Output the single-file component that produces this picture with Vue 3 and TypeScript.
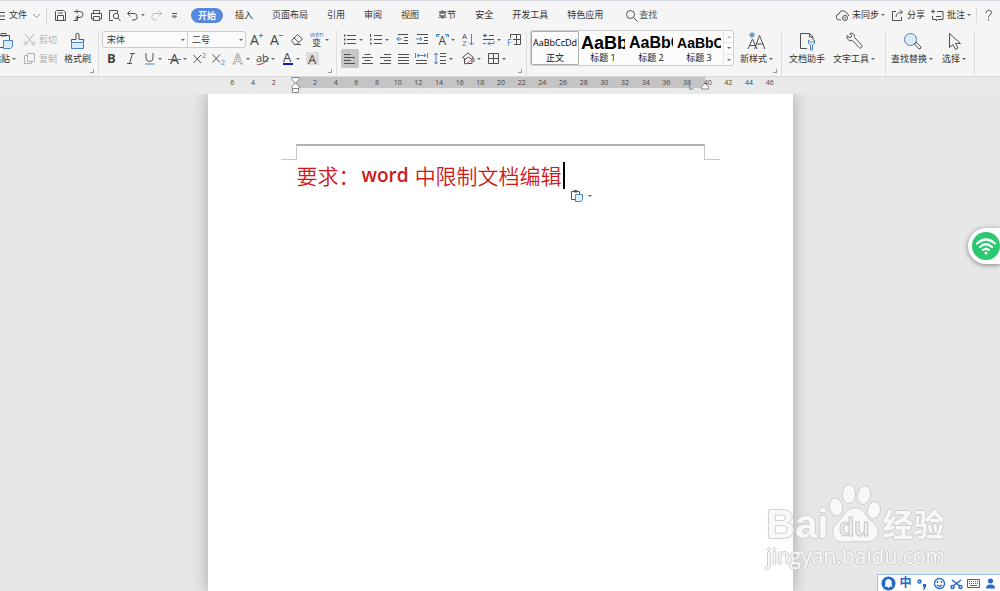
<script setup lang="ts">
import { ref } from 'vue'

interface Tool {
  icon: string
  label: string
  caret?: boolean
  active?: boolean
}

const A = (size: number, x: number, y: number, extra = '') =>
  `<text x="${x}" y="${y}" font-size="${size}" ${extra}>A</text>`

const icons: Record<string, string> = {
  menu: '<path d="M0 4.500h5M0 8h5M0 11.500h5"/>',
  chevron: '<path d="M4 6l3.500 3.500L11 6" stroke="#999"/>',
  save: '<path d="M3.500 2.500h7l2 2v8h-10v-9zM4.500 12.500v-5h6v5M5 5h5"/>',
  export: '<path d="M3 3.500h4M6 1.500v4M6 3.500h3a3 3 0 0 1 0 6H6M8 7.500l-3 2v3M2.500 12.500h4v-3"/>',
  print: '<path d="M4.500 5V2.500h6V5M4.500 11h-2V5.500h10V11h-2M4.500 8.500h6v4h-6z"/>',
  preview: '<path d="M6 12.500H2.500v-10h8V5"/><circle cx="9" cy="8" r="2.700"/><path d="M11 10l2.500 3"/>',
  undo: '<path d="M5.500 2.500l-3 3 3 3M2.500 5.500H9a3 3 0 0 1 0 6.500H7"/>',
  redo: '<path d="M9.500 2.500l3 3-3 3M12.500 5.500H6A3 3 0 0 0 6 12h2" stroke="#bbb"/>',
  more: '<path d="M5 5.500h5M5.500 8h4l-2 2z"/>',
  search: '<circle cx="6.500" cy="6.500" r="4"/><path d="M9.500 9.500l4 4"/>',
  cloud: '<path d="M6 12H4.500a3 3 0 0 1-.500-6 4 4 0 0 1 7.500-1 3 3 0 0 1 2 3"/><circle cx="10" cy="10" r="2.500"/><path d="M9 10h2"/>',
  share: '<path d="M6 3.500H2.500v9h9V9M6 9c0-3 2-5 6-5M10 1.500L12.500 4 10 6.500"/>',
  comment: '<path d="M7 3.500h6v8H8l-1.500 1.500v-1.500h-4V8M1 3.500h4M3 1.500v4M6 8.500h5"/>',
  help: '<path d="M5 5c0-3.500 5.500-3.500 5.500-.500C10.500 7 7.500 6.500 7.500 9.500M7.500 11v1.500"/>',
  cut: '<path d="M3 2l7.500 9M12 2l-7.500 9" stroke="#b4b4b4"/><circle cx="3.500" cy="11.500" r="1.500" stroke="#b4b4b4"/><circle cx="11.500" cy="11.500" r="1.500" stroke="#b4b4b4"/>',
  copy: '<path d="M5.500 2.500h7v8h-7zM5 4.500H2.500v8h7V11" stroke="#b4b4b4"/>',
  grow: A(14, 1, 12.5) + '<path d="M10 3.500h4M12 1.500v4" stroke="#4b84c4"/>',
  shrink: A(14, 1, 12.5) + '<path d="M10 3.500h4" stroke="#4b84c4"/>',
  eraser: '<path d="M2.500 8.500l6-6 5 4.500-6 5.500h-2zM5 6l5 4.500M5 12.500h7"/>',
  pinyin: '<text x="1" y="5" font-size="7" fill="#4b84c4">wén</text><text x="3" y="14" font-size="9">变</text>',
  bold: '<text x="3" y="12" font-size="13" font-weight="700">B</text>',
  italic: '<path d="M7 2.500h5M4 12.500h5M9.500 2.500l-3 10"/>',
  underline: '<path d="M4 2v5a3.500 3.500 0 0 0 7 0V2"/><path d="M3 13h9.500" stroke="#4b84c4"/>',
  strike: A(14, 3, 12.5) + '<path d="M1 8.500h13" stroke="#d04858"/>',
  superscript: '<path d="M1.500 4l7.500 8M9 4l-7.500 8"/><text x="10" y="7" font-size="7" fill="#4b84c4">2</text>',
  subscript: '<path d="M1.500 3.500l7.500 8M9 3.500l-7.500 8"/><text x="10" y="14" font-size="7" fill="#4b84c4">2</text>',
  outline: '<text x="3" y="12.500" font-size="14" font-weight="600" style="fill:#fff;stroke:#aaa;stroke-width:.8">A</text>',
  highlight: '<text x="1" y="11" font-size="11">ab</text><path d="M4 13.500l4-1 6-6" /><path d="M2 13.500h4" stroke="#d06070"/>',
  fontcolor: A(13, 3, 10.5) + '<path d="M3 13h10" stroke="#1414c8" stroke-width="2"/>',
  shade: '<path d="M1 1h13v13H1z" fill="#ddd" stroke="none"/>' + A(13, 3, 12.5),
  bullets: '<path d="M4 3.500h9M4 7.500h9M4 11.500h9"/><path d="M1 3.500h1.500M1 7.500h1.500M1 11.500h1.500" stroke-width="2"/>',
  numbering: '<path d="M5 3.500h8M5 7.500h8M5 11.500h8M1.500 2v3"/><path d="M1 7.500h1.500M1 11.500h1.500" stroke-width="2"/>',
  outdent: '<path d="M3 2.500h10M9 5.500h4M9 8.500h4M3 11.500h10"/><path d="M7 7H1.500M4 5L2 7l2 2" stroke="#4b84c4"/>',
  indent: '<path d="M2 2.500h11M9 5.500h4M9 8.500h4M2 11.500h11"/><path d="M1 7h6M5 5l2 2-2 2" stroke="#4b84c4"/>',
  scale: A(12, 3.5, 13) + '<path d="M1.500 5V2.500H5M2 3l2 2M13.500 5V2.500H10M13 3l-2 2" stroke="#4b84c4"/>',
  sort: '<text x="1" y="7" font-size="8">A</text><text x="1" y="14" font-size="8" fill="#4b84c4">Z</text><path d="M10.500 2v11M8 10.500l2.500 2.500 2.500-2.500" stroke="#4b84c4"/>',
  wrap: '<path d="M2 3.500h4M8 3.500h5M2 7.500h11"/><path d="M3 2l3 1.500L3 5M2 11.500h3M13 9v2.500H7M9 9.500l-2 2 2 2" stroke="#4b84c4"/>',
  frame: '<path d="M3.500 6V2.500h10v10H7M9.500 2.500v10M6 7.500h7.500"/><text x="0" y="14" font-size="9" fill="#4b84c4">F</text>',
  left: '<path d="M2 3.500h7M2 6.500h11M2 9.500h7M2 12.500h11"/>',
  center: '<path d="M4.500 3.500h6M2 6.500h11M4.500 9.500h6M2 12.500h11"/>',
  right: '<path d="M6 3.500h7M2 6.500h11M6 9.500h7M2 12.500h11"/>',
  justify: '<path d="M2 3.500h11M2 6.500h11M2 9.500h11M2 12.500h11"/>',
  distribute: '<path d="M2 9.500h11M2 12.500h11"/><path d="M1.500 2v5M13.500 2v5M3 4.500h9M5 3L3 4.500 5 6M10 3l2 1.500L10 6" stroke="#4b84c4"/>',
  spacing: '<path d="M7 2.500h6M7 5.500h6M7 9.500h6M7 12.500h6"/><path d="M3 2v11M1 4l2-2 2 2M1 11l2 2 2-2" stroke="#4b84c4"/>',
  fill: '<path d="M1.500 6.500L7 2l6 5-2 .500v5H3.500v-5zM4 8.500l3.500-2.500 3.500 2.500M13 8v3"/><path d="M4 13.500l6-4" stroke="#d06070"/>',
  border: '<path d="M2.500 2.500h10v10h-10zM7.500 2.500v10M2.500 7.500h10"/>',
}

const bigIcons: Record<string, string> = {
  paste: '<path d="M1 3.500h11.500V8M4 3V1.500h5V4H4M1 15.500h5"/><path d="M6.500 8.500h9v6l-2 2h-7z" fill="#dcebfa" stroke="#4b84c4"/>',
  painter: '<path d="M2.500 10V7.500H7V2q1.500-1.500 3 0v5.500h4.500V10"/><path d="M2.500 10.500h12v6h-12z" fill="#dcebfa" stroke="#4b84c4"/>',
  newstyle: '<path d="M1 17L5.500 7 10 17M2.500 13.500h6M7.500 17L12.500 3.500 18 17M9.500 12h6.500"/><path d="M5 0v6M2 3h6M3 1l4 4M7 1L3 5" stroke="#4b84c4"/>',
  assistant: '<path d="M9 16.500H2.500v-15h9L15 5v3M11.500 1.500V5H15"/><path d="M10.500 8v3.500l2 1.500V18h2v-5l2-1.500V8l-2 2h-2z" fill="#dcebfa" stroke="#4b84c4"/>',
  wrench: '<path d="M2 3.500l3 2.500 2-2-2-2.500c3-1 5 1 4.500 4l7 7.500c1.500 2-1 4-2.500 2.500L7.500 8.500C4 9.500 1.500 7 2 3.500z"/>',
  find: '<circle cx="7.500" cy="7.500" r="6" fill="#dcebfa" stroke="#4b84c4"/><path d="M12 11l1-1 5 5q0 2-2 2l-4.500-5z"/>',
  pointer: '<path d="M4.500 1.500v14l3.500-3 2.500 5 2.500-1.500-2.500-4.500h5z"/>',
}

const quick: Tool[] = [
  { icon: 'save', label: '保存' },
  { icon: 'export', label: '输出' },
  { icon: 'print', label: '打印' },
  { icon: 'preview', label: '打印预览' },
  { icon: 'undo', label: '撤销', caret: true },
  { icon: 'redo', label: '恢复' },
  { icon: 'more', label: '更多' },
]
const tabs = ['开始', '插入', '页面布局', '引用', '审阅', '视图', '章节', '安全', '开发工具', '特色应用']
const current = ref('开始')

const fontTop: Tool[] = [
  { icon: 'grow', label: '增大字号' },
  { icon: 'shrink', label: '减小字号' },
  { icon: 'eraser', label: '清除格式' },
  { icon: 'pinyin', label: '拼音指南', caret: true },
]
const fontBottom: Tool[] = [
  { icon: 'bold', label: '加粗' },
  { icon: 'italic', label: '倾斜' },
  { icon: 'underline', label: '下划线', caret: true },
  { icon: 'strike', label: '删除线', caret: true },
  { icon: 'superscript', label: '上标' },
  { icon: 'subscript', label: '下标' },
  { icon: 'outline', label: '文字效果', caret: true },
  { icon: 'highlight', label: '突出显示', caret: true },
  { icon: 'fontcolor', label: '字体颜色', caret: true },
  { icon: 'shade', label: '字符底纹' },
]
const paraTop: Tool[] = [
  { icon: 'bullets', label: '项目符号', caret: true },
  { icon: 'numbering', label: '编号', caret: true },
  { icon: 'outdent', label: '减少缩进量' },
  { icon: 'indent', label: '增加缩进量' },
  { icon: 'scale', label: '中文版式', caret: true },
  { icon: 'sort', label: '排序' },
  { icon: 'wrap', label: '换行', caret: true },
  { icon: 'frame', label: '制表位' },
]
const aligns: Tool[] = [
  { icon: 'left', label: '左对齐', active: true },
  { icon: 'center', label: '居中' },
  { icon: 'right', label: '右对齐' },
  { icon: 'justify', label: '两端对齐' },
  { icon: 'distribute', label: '分散对齐' },
]
const paraBottom: Tool[] = [
  { icon: 'fill', label: '底纹颜色', caret: true },
  { icon: 'border', label: '边框', caret: true },
]
const styles = [
  { name: '正文', sample: 'AaBbCcDd', kind: 'body' },
  { name: '标题 1', sample: 'AaBb', kind: 'h1' },
  { name: '标题 2', sample: 'AaBbC', kind: 'h2' },
  { name: '标题 3', sample: 'AaBbCc', kind: 'h3' },
]
const marks = Array.from({ length: 27 }, (_, i) => Math.abs(i * 2 - 6))
</script>

<template>
  <div class="app">
    <header class="menubar">
      <button class="file">
        <svg class="icon burger" viewBox="0 0 5 15" v-html="icons.menu"></svg>文件
        <svg class="icon" viewBox="0 0 15 15" v-html="icons.chevron"></svg>
      </button>
      <div class="quick">
        <button v-for="t in quick" :key="t.icon" class="tool" :aria-label="t.label">
          <svg class="icon" viewBox="0 0 15 15" v-html="icons[t.icon]"></svg>
          <i v-if="t.caret" class="caret"></i>
        </button>
      </div>
      <nav class="tabs">
        <button v-for="t in tabs" :key="t" :class="{ on: t === current }" @click="current = t">{{ t }}</button>
      </nav>
      <label class="search">
        <svg class="icon" viewBox="0 0 15 15" v-html="icons.search"></svg>
        <input type="text" placeholder="查找" aria-label="查找" />
      </label>
      <div class="account">
        <button><svg class="icon" viewBox="0 0 15 15" v-html="icons.cloud"></svg>未同步<i class="caret"></i></button>
        <button><svg class="icon" viewBox="0 0 15 15" v-html="icons.share"></svg>分享</button>
        <button><svg class="icon" viewBox="0 0 15 15" v-html="icons.comment"></svg>批注<i class="caret"></i></button>
        <button class="help" aria-label="帮助"><svg class="icon" viewBox="0 0 15 15" v-html="icons.help"></svg></button>
      </div>
    </header>

    <div class="ribbon">
      <section class="group clipboard">
        <button class="big paste">
          <svg class="bigicon" viewBox="0 0 19 19" v-html="bigIcons.paste"></svg>
          <span>粘贴<i class="caret"></i></span>
        </button>
        <div class="rows">
          <button class="text-tool" disabled><svg class="icon" viewBox="0 0 15 15" v-html="icons.cut"></svg>剪切</button>
          <button class="text-tool" disabled><svg class="icon" viewBox="0 0 15 15" v-html="icons.copy"></svg>复制</button>
        </div>
        <button class="big">
          <svg class="bigicon" viewBox="0 0 17 19" v-html="bigIcons.painter"></svg>
          <span>格式刷</span>
        </button>
        <button class="launcher" aria-label="剪贴板设置"></button>
      </section>

      <section class="group font">
        <div class="rows">
          <div class="row">
            <label class="combo family">
              <select aria-label="字体"><option>宋体</option></select><i class="caret"></i>
            </label>
            <label class="combo size">
              <select aria-label="字号"><option>二号</option></select><i class="caret"></i>
            </label>
            <div class="row spaced">
              <button v-for="t in fontTop" :key="t.icon" class="tool" :aria-label="t.label">
                <svg class="icon" viewBox="0 0 15 15" v-html="icons[t.icon]"></svg>
                <i v-if="t.caret" class="caret"></i>
              </button>
            </div>
          </div>
          <div class="row">
            <button v-for="t in fontBottom" :key="t.icon" class="tool" :aria-label="t.label">
              <svg class="icon" viewBox="0 0 15 15" v-html="icons[t.icon]"></svg>
              <i v-if="t.caret" class="caret"></i>
            </button>
          </div>
        </div>
        <button class="launcher" aria-label="字体设置"></button>
      </section>

      <section class="group paragraph">
        <div class="rows">
          <div class="row spaced">
            <button v-for="t in paraTop" :key="t.icon" class="tool" :aria-label="t.label">
              <svg class="icon" viewBox="0 0 15 15" v-html="icons[t.icon]"></svg>
              <i v-if="t.caret" class="caret"></i>
            </button>
          </div>
          <div class="row">
            <button v-for="t in aligns" :key="t.icon" class="tool align" :class="{ active: t.active }" :aria-label="t.label">
              <svg class="icon" viewBox="0 0 15 15" v-html="icons[t.icon]"></svg>
            </button>
            <button class="tool line-spacing" aria-label="行距">
              <svg class="icon" viewBox="0 0 15 15" v-html="icons.spacing"></svg><i class="caret"></i>
            </button>
            <button v-for="t in paraBottom" :key="t.icon" class="tool" :aria-label="t.label">
              <svg class="icon" viewBox="0 0 15 15" v-html="icons[t.icon]"></svg>
              <i v-if="t.caret" class="caret"></i>
            </button>
          </div>
        </div>
        <button class="launcher" aria-label="段落设置"></button>
      </section>

      <section class="group styles">
        <div class="gallery">
          <button v-for="(s, i) in styles" :key="s.name" class="style" :class="{ chosen: i === 0 }">
            <span class="sample" :class="s.kind">{{ s.sample }}</span>
            <span class="name">{{ s.name }}</span>
          </button>
          <div class="scroller">
            <button aria-label="向上"><i class="caret up"></i></button>
            <button aria-label="向下"><i class="caret"></i></button>
            <button aria-label="展开"><i class="caret lined"></i></button>
          </div>
        </div>
        <button class="big">
          <svg class="bigicon" viewBox="0 0 19 19" v-html="bigIcons.newstyle"></svg>
          <span>新样式<i class="caret"></i></span>
        </button>
        <button class="launcher" aria-label="样式设置"></button>
      </section>

      <section class="group tools">
        <button class="big">
          <svg class="bigicon" viewBox="0 0 19 19" v-html="bigIcons.assistant"></svg>
          <span>文档助手</span>
        </button>
        <button class="big">
          <svg class="bigicon" viewBox="0 0 19 19" v-html="bigIcons.wrench"></svg>
          <span>文字工具<i class="caret"></i></span>
        </button>
      </section>

      <section class="group select">
        <button class="big">
          <svg class="bigicon" viewBox="0 0 19 19" v-html="bigIcons.find"></svg>
          <span>查找替换<i class="caret"></i></span>
        </button>
        <button class="big">
          <svg class="bigicon" viewBox="0 0 19 19" v-html="bigIcons.pointer"></svg>
          <span>选择<i class="caret"></i></span>
        </button>
      </section>
    </div>

    <div class="ruler">
      <div class="band">
        <svg class="marker start" viewBox="0 0 9 17">
          <path d="M1 .5h7v2l-3.500 4-3.500-4zM4.500 6L8 9.500v2H1v-2zM1.500 11.500h6v4h-6z" />
        </svg>
        <svg class="marker end" viewBox="0 0 26 17">
          <path d="M6.500 8v4h4" /><path d="M22 6l3.500 4v2h-7v-2z" />
        </svg>
      </div>
      <div class="marks"><span v-for="(m, i) in marks" :key="i">{{ m || '' }}</span></div>
    </div>

    <main class="workspace">
      <article class="page">
        <div class="page-header"></div>
        <p class="line">
          <span>要求：</span><b>word</b><span>中限制文档编辑</span><i class="cursor"></i>
          <button class="paste-options" aria-label="粘贴选项">
            <svg viewBox="0 0 14 14">
              <path d="M5 10.500H1.500v-8h8V5M4 3V1.500h3V3z" />
              <path d="M5.500 5.500h7v5l-1.500 2H5.500z" fill="#e6f0fb" stroke="#4b84c4" />
            </svg>
            <i class="caret"></i>
          </button>
        </p>
      </article>
    </main>

    <button class="wifi" aria-label="无线网络">
      <svg viewBox="0 0 28 28">
        <circle cx="14" cy="14" r="14" fill="#2bc871" />
        <g fill="none" stroke="#fff" stroke-width="2.200" stroke-linecap="round">
          <path d="M5 11.500q9-8 18 0M8 15q6-5.500 12 0M11 18q3-2.500 6 0" />
        </g>
        <circle cx="14" cy="21" r="1.500" fill="#fff" />
      </svg>
    </button>

    <div class="watermark">
      <div class="brand">
        <span class="bai">Bai</span>
        <svg class="paw" viewBox="0 0 54 60">
          <g fill="#f8f8f8" stroke="#cfcfcf">
            <ellipse cx="7" cy="23" rx="6.500" ry="9" transform="rotate(-12 7 23)" />
            <ellipse cx="20" cy="10" rx="6.500" ry="9.500" />
            <ellipse cx="35" cy="11" rx="6.500" ry="9.500" transform="rotate(12 35 11)" />
            <ellipse cx="45" cy="26" rx="6.500" ry="8.500" transform="rotate(12 45 26)" />
            <path d="M26 24c8 0 9 6 15 12 7 5 10 10 7 16-3 7-10 6-22 5.500C15 58 7 60 4.500 52 2 45 6 41 11 36c6-6 7-12 15-12z" />
          </g>
          <text x="10" y="52" font-size="25" font-weight="700" fill="#ececec" stroke="#c8c8c8">du</text>
        </svg>
        <span class="jingyan">经验</span>
      </div>
      <div class="site">jingyan.baidu.com</div>
    </div>

    <div class="ime">
      <button aria-label="输入法">
        <svg viewBox="0 0 15 15"><circle cx="7.500" cy="7.500" r="7" fill="#2468c8" /><path d="M7.500 3a3.500 3.500 0 0 1 3 5l1 2.500H9L7.500 12 6 10.500H3.500l1-2.500a3.500 3.500 0 0 1 3-5z" fill="#fff" /></svg>
      </button>
      <button>中</button>
      <button aria-label="标点">
        <svg viewBox="0 0 15 15"><circle cx="4.500" cy="5.500" r="1.500" fill="none" stroke="#2468c8" stroke-width="1.500" /><path d="M8 8h3v3l-2 3H8l1-3H8z" fill="#2468c8" /></svg>
      </button>
      <button aria-label="表情">
        <svg viewBox="0 0 15 15" fill="none" stroke="#2468c8" stroke-width="1.300"><circle cx="7.500" cy="7.500" r="5" /><path d="M5.500 5v2M9.500 5v2M5 9q2.500 2.500 5 0" /></svg>
      </button>
      <button aria-label="截图">
        <svg viewBox="0 0 15 15" fill="none" stroke="#2468c8" stroke-width="1.500"><path d="M3 4l8 6M12 4l-8 6" /><circle cx="3.500" cy="11" r="1.500" /><circle cx="11.500" cy="11" r="1.500" /></svg>
      </button>
      <button aria-label="键盘">
        <svg viewBox="0 0 15 15" fill="none" stroke="#2468c8"><path d="M1.500 3.500h12v8h-12z" /><path d="M3 5.500h9M3 7.500h9" stroke-dasharray="1 1" /><path d="M4 9.500h7" /></svg>
      </button>
      <button aria-label="用户">
        <svg viewBox="0 0 15 15" fill="#2468c8"><circle cx="7.500" cy="5" r="2.500" /><path d="M3 12.500q0-4 4.500-4t4.500 4z" /></svg>
      </button>
    </div>
  </div>
</template>

<style>
html,
body {
  background: #e7e7e7;
}
.icon text,
.bigicon text {
  stroke: none;
}
.icon text:not([fill]) {
  fill: #444;
}
</style>

<style scoped>
.app {
  display: flex;
  flex-direction: column;
  min-height: 100vh;
  overflow: hidden;
  background: #e7e7e7;
  color: #333;
  font-family: 'Open Sans', 'Noto Sans CJK SC', sans-serif;
  font-size: 9px;
  line-height: 14px;
}
button,
select,
input {
  margin: 0;
  padding: 0;
  border: 0;
  background: none;
  color: inherit;
  font: inherit;
  white-space: nowrap;
}
.icon {
  flex: none;
  width: 15px;
  height: 15px;
  overflow: visible;
  fill: none;
  stroke: #505050;
}
.bigicon {
  flex: none;
  width: 19px;
  height: 19px;
  fill: none;
  stroke: #505050;
}
.caret {
  display: inline-block;
  flex: none;
  width: 0;
  height: 0;
  border: 2px solid transparent;
  border-top-color: #666;
  border-bottom-width: 0;
}
.menubar {
  display: flex;
  align-items: center;
  height: 28px;
  padding-bottom: 1px;
  border-top: 1px solid #d6d8e0;
  background: #f5f5f5;
}
.file {
  display: flex;
  align-items: center;
  gap: 2px;
  padding-right: 2px;
  border-right: 1px solid #d4d4d4;
}
.burger {
  width: 5px;
  margin-right: 2px;
}
.quick {
  display: flex;
  margin: 0 6px 0 4px;
}
.tool {
  display: flex;
  align-items: center;
  padding: 2px;
}
.quick .tool {
  padding: 2px 1px 2px 2px;
}
.tool .caret {
  margin: 0 1px;
}
.tabs {
  display: flex;
  gap: 1px;
}
.tabs button {
  padding: 0 9px;
}
.tabs .on {
  margin: 0 2px;
  padding: 0 7px;
  border-radius: 8px;
  background: #5688e0;
  color: #fff;
  font-weight: 700;
  line-height: 15px;
}
.search {
  display: flex;
  align-items: center;
  margin-left: 12px;
}
.search input {
  width: 36px;
}
.search input::placeholder {
  color: #555;
  opacity: 1;
}
.account {
  display: flex;
  gap: 5px;
  margin-left: auto;
}
.account button {
  display: flex;
  align-items: center;
  gap: 2px;
}
.account .help {
  padding: 0 4px;
  border-left: 1px solid #ddd;
}
.ribbon {
  display: flex;
  height: 46px;
  border-bottom: 1px solid #d8d8d8;
  background: #f5f5f5;
}
.group {
  display: flex;
  flex: none;
  border-right: 1px solid #e0e0e0;
}
.launcher {
  align-self: flex-end;
  width: 4px;
  height: 4px;
  margin: 0 4px 3px 0;
  border-right: 1px solid #999;
  border-bottom: 1px solid #999;
}
.row {
  display: flex;
  align-items: center;
  height: 19px;
}
.spaced {
  gap: 1px;
}
.font .spaced {
  margin-left: 1px;
}
.big {
  display: flex;
  flex-direction: column;
  align-items: center;
  gap: 1px;
  padding-top: 2px;
  height: 38px;
}
.big span {
  display: flex;
  align-items: center;
  gap: 2px;
}
.paste {
  align-items: flex-end;
  width: 16px;
  overflow: hidden;
}
.clipboard .rows {
  margin: 0 7px 0 6px;
}
.clipboard .launcher {
  margin-left: -1px;
}
.text-tool {
  display: flex;
  align-items: center;
  gap: 2px;
  height: 19px;
  color: #b0b0b0;
}
.font {
  padding-left: 3px;
}
.font .launcher {
  margin-left: -4px;
}
.combo {
  display: grid;
  align-items: center;
  height: 15px;
  border: 1px solid #cdcdcd;
  background: #fbfbfb;
}
.combo select {
  grid-area: 1 / 1;
  width: 100%;
  padding-left: 4px;
  appearance: none;
}
.combo .caret {
  grid-area: 1 / 1;
  justify-self: end;
  margin-right: 2px;
  pointer-events: none;
}
.family {
  width: 84px;
  border-radius: 3px 0 0 3px;
}
.size {
  width: 57px;
  border-left: 0;
  border-radius: 0 3px 3px 0;
}
.paragraph {
  padding-left: 4px;
}
.align {
  width: 18px;
  padding: 2px 1px;
}
.active {
  border-radius: 2px;
  background: #c6c6c6;
}
.line-spacing {
  margin-right: 3px;
}
.paragraph .launcher {
  margin-left: -6px;
}
.styles {
  padding-left: 3px;
}
.gallery {
  display: flex;
  height: 34px;
  margin: 0 6px 0 0;
  border: 1px solid #d0d0d0;
  border-radius: 3px;
  background: #fcfcfc;
}
.style {
  width: 48px;
  height: 34px;
  padding: 0 2px;
  overflow: hidden;
}
.chosen {
  box-shadow: inset 0 0 0 1px #aaa;
  border-radius: 2px;
}
.sample {
  display: block;
  height: 20px;
  overflow: hidden;
  color: #000;
  font-family: 'Liberation Sans', Arial, sans-serif;
  font-weight: 700;
  line-height: 24px;
  text-align: left;
}
.body {
  font-family: 'Open Sans', sans-serif;
  font-size: 9px;
  font-weight: 400;
}
.h1 {
  font-size: 18px;
}
.h2 {
  font-size: 16px;
}
.h3 {
  font-size: 14px;
}
.name {
  display: block;
  color: #111;
}
.scroller {
  display: grid;
  grid-template-rows: repeat(3, 1fr);
  width: 9px;
  border-left: 1px solid #e4e4e4;
}
.scroller button {
  display: flex;
  align-items: center;
  justify-content: center;
}
.scroller button + button {
  border-top: 1px solid #e4e4e4;
}
.up {
  transform: rotate(180deg);
  opacity: 0.5;
}
.lined {
  box-shadow: 0 -3px 0 -1px #777;
}
.tools {
  gap: 8px;
  padding: 0 10px 0 7px;
}
.select {
  gap: 9px;
  padding: 0 8px 0 5px;
}
.ruler {
  display: grid;
  justify-items: center;
  height: 17px;
  background: #e9e9e9;
}
.band {
  position: relative;
  grid-area: 1 / 1;
  width: 409px;
  height: 11px;
  background: #c4c4c4;
}
.marker {
  position: absolute;
  top: 0;
  height: 17px;
  fill: #fff;
  stroke: #888;
}
.start {
  left: -5px;
  width: 9px;
}
.end {
  right: -4px;
  width: 26px;
}
.end path:first-child {
  fill: none;
}
.marks {
  z-index: 1;
  display: grid;
  grid-area: 1 / 1;
  grid-template-columns: repeat(27, 1fr);
  width: 558px;
  padding-left: 2px;
  color: #444;
  font-size: 7px;
  line-height: 11px;
  text-align: center;
}
.workspace {
  display: flex;
  flex: 1;
  justify-content: center;
  overflow: hidden;
}
.page {
  box-sizing: border-box;
  width: 585px;
  padding: 50px 88px 0;
  background: #fff;
  box-shadow: 0 0 15px rgba(0, 0, 0, 0.3);
}
.page-header {
  position: relative;
  height: 14px;
  border: 1px solid #c8c8c8;
  border-top: 2px solid #b0b0b0;
  border-bottom: 0;
}
.page-header::before,
.page-header::after {
  position: absolute;
  bottom: 0;
  width: 16px;
  border-bottom: 1px solid #c8c8c8;
  content: '';
}
.page-header::before {
  right: 100%;
}
.page-header::after {
  left: 100%;
}
.line {
  position: relative;
  display: flex;
  width: max-content;
  margin: 2px 0 0;
  padding-left: 1px;
  color: #d01818;
  font-family: 'Noto Sans CJK SC', sans-serif;
  font-size: 21px;
  font-weight: 350;
  line-height: 27px;
}
.line b {
  margin: 0 6px 0 2px;
  font-family: 'Open Sans', sans-serif;
  font-size: 19px;
  font-weight: 600;
}
.cursor {
  width: 2px;
  margin-left: 1px;
  background: #000;
}
.paste-options {
  position: absolute;
  top: 27px;
  left: 100%;
  display: flex;
  align-items: center;
  gap: 4px;
  padding-left: 5px;
}
.paste-options svg {
  width: 14px;
  height: 14px;
  fill: #fff;
  stroke: #555;
}
.wifi {
  position: fixed;
  top: 228px;
  right: 0;
  display: flex;
  padding: 4px 0 4px 4px;
  border-radius: 18px 0 0 18px;
  background: #fff;
  box-shadow: 0 1px 5px rgba(0, 0, 0, 0.45);
}
.wifi svg {
  width: 28px;
  height: 28px;
}
.watermark {
  position: fixed;
  right: 55px;
  bottom: 23px;
  color: #f8f8f8;
  font-family: 'Liberation Sans', 'Noto Sans CJK SC', sans-serif;
  text-shadow: 1px 0 #cfcfcf, -1px 0 #cfcfcf, 0 1px #cfcfcf, 0 -1px #cfcfcf;
}
.brand {
  display: flex;
  align-items: flex-end;
  height: 60px;
  font-weight: 700;
}
.bai {
  font-size: 40px;
  line-height: 40px;
}
.paw {
  width: 54px;
  height: 60px;
  text-shadow: none;
}
.jingyan {
  font-size: 31px;
  line-height: 36px;
}
.site {
  font-family: 'Open Sans', sans-serif;
  font-size: 21px;
  line-height: 24px;
}
.ime {
  position: fixed;
  right: 0;
  bottom: 0;
  display: flex;
  align-items: center;
  gap: 2px;
  height: 16px;
  padding: 0 2px 0 3px;
  border: 1px solid #9cc0ea;
  border-width: 1px 0 0 1px;
  background: #fff;
  color: #2468c8;
  font-size: 12px;
  font-weight: 700;
}
.ime button {
  display: flex;
  justify-content: center;
  width: 15px;
}
.ime svg {
  width: 15px;
  height: 15px;
}
</style>
